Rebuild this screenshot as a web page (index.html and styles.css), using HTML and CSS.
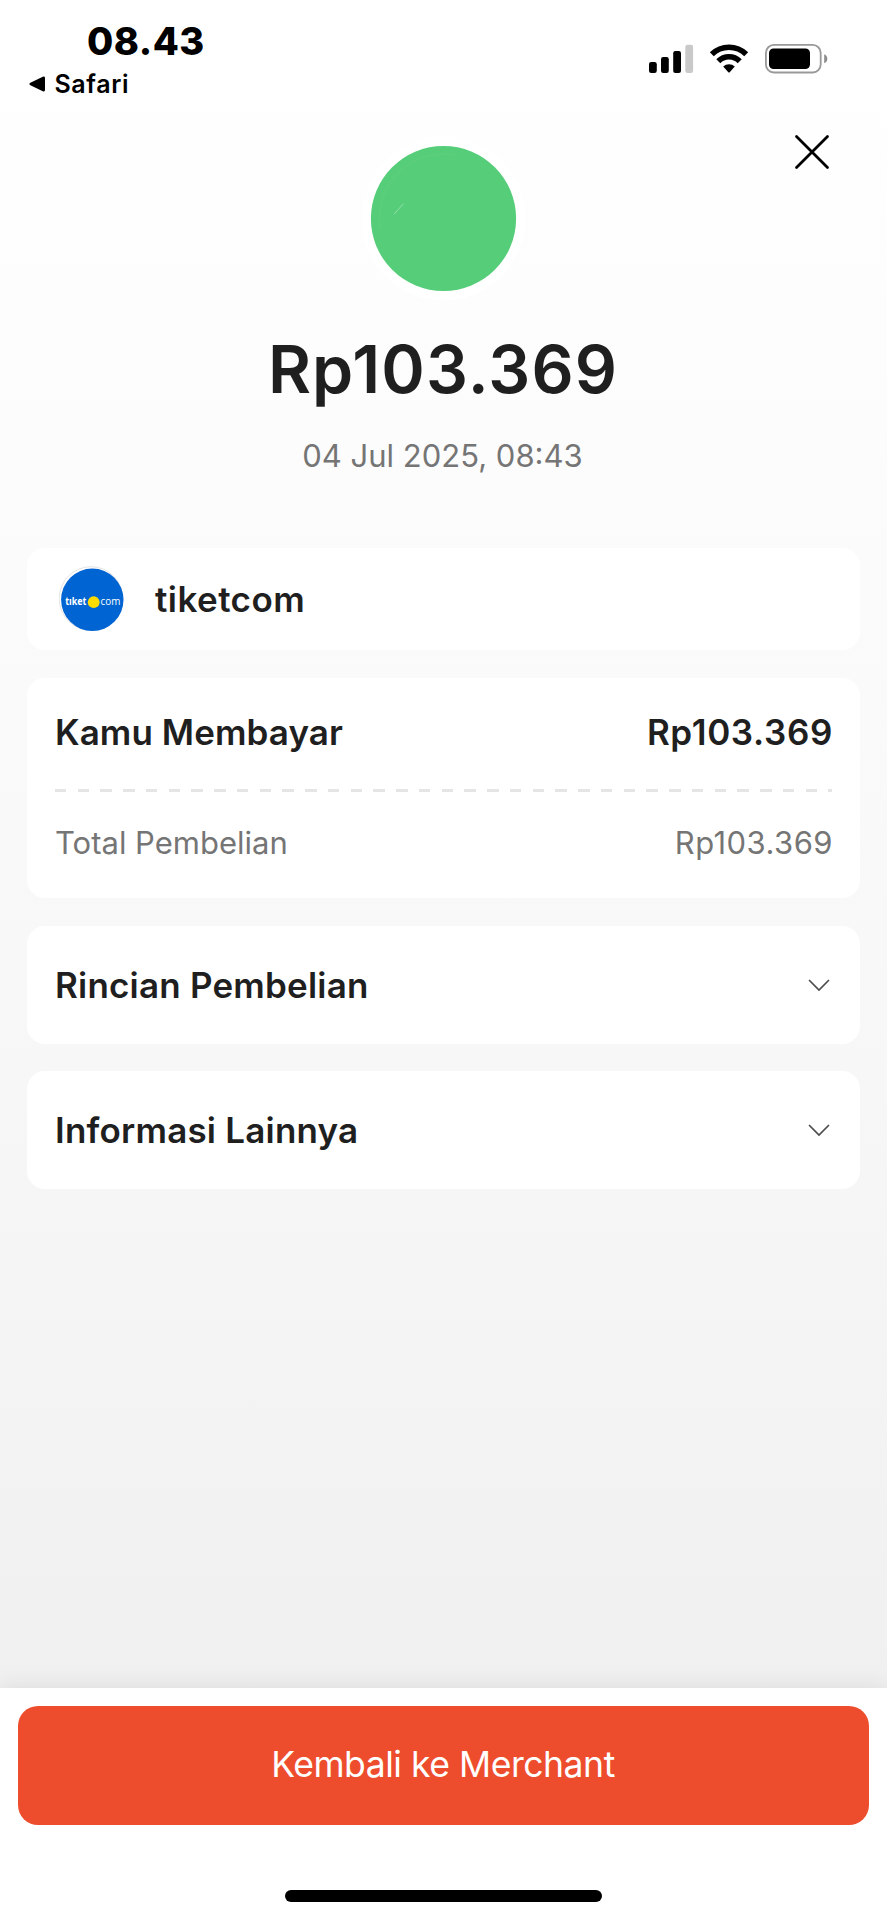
FILE: index.html
```html
<!DOCTYPE html>
<html lang="id">
<head>
<meta charset="utf-8">
<title>Detail Pembayaran</title>
<link rel="stylesheet" href="styles.css">
</head>
<body>
<div class="screen">
  <header class="status">
    <div class="status-left">
      <div class="time"><span>08.43</span></div>
      <div class="back">
        <svg width="17" height="16" viewBox="0 0 17 16"><path d="M1.4 6.8 13.8.7Q16 0 16 2V14Q16 16 13.8 15.3L1.4 9.2Q-.6 8 1.4 6.8Z"/></svg>
        <span>Safari</span>
      </div>
    </div>
    <svg class="status-icons" width="180" height="32" viewBox="648 43 180 32">
      <rect x="649" y="62" width="7.8" height="11" rx="2.2"/>
      <rect x="661" y="57" width="7.8" height="16" rx="2.2"/>
      <rect x="673.2" y="51" width="7.8" height="22" rx="2.2"/>
      <rect x="685.3" y="44.8" width="7.8" height="28.2" rx="2.2" fill="#c9c9c9"/>
      <g fill="none" stroke="#000" stroke-width="5.6">
        <path d="M711.8 54.3A24.6 24.6 0 0 1 746.2 54.3"/>
        <path d="M718.3 61.2A15 15 0 0 1 739.7 61.2"/>
      </g>
      <path d="M723.2 66.6A8.4 8.4 0 0 1 734.8 66.6L729.7 72.2Q729 72.9 728.3 72.2Z"/>
      <rect x="765.9" y="44.9" width="54.8" height="27.6" rx="8" fill="none" stroke="#999" stroke-width="1.8"/>
      <rect x="769" y="48.4" width="41" height="20.7" rx="4.6"/>
      <path d="M824.2 54.3Q827.3 55.5 827.3 58.8 827.3 62 824.2 63.2Z" fill="#8c8c8c"/>
    </svg>
  </header>

  <main class="content">
    <section class="hero">
      <button class="close" aria-label="Tutup">
        <svg width="36" height="36" viewBox="0 0 36 36" fill="none" stroke="#000" stroke-width="2.8" stroke-linecap="round"><path d="M2.5 2.5 33.5 33.5M33.5 2.5 2.5 33.5"/></svg>
      </button>
      <svg class="badge" width="165" height="165" viewBox="-82.5 -82.5 165 165">
        <circle r="82" fill="#fff"/>
        <circle r="72.6" fill="#56cd79"/>
        <path d="M-63.5 10A64.3 64.3 0 0 1 10-63.5" fill="none" stroke="#64cf82" stroke-width=".7"/>
        <path d="M-49.5-4.2-40-15" stroke="#91dfa8" stroke-width="1"/>
      </svg>
      <h1 class="amount"><span>Rp103.369</span></h1>
      <p class="date"><span>04 Jul 2025, 08:43</span></p>
    </section>

    <section class="card merchant">
      <svg class="logo" width="66" height="68" viewBox="59 565 66 68">
        <circle cx="91" cy="598.5" r="31.8" fill="#fff" stroke="#e4e4e4" stroke-width="1"/>
        <circle cx="92.3" cy="599.8" r="31.2" fill="#0064d2"/>
        <text class="logo-bold" x="65.2" y="604.6" textLength="21.3" lengthAdjust="spacingAndGlyphs">tıket</text>
        <circle cx="93.7" cy="602.2" r="5.9" fill="#ffdc00"/>
        <text class="logo-text" x="100.5" y="604.6" textLength="19.8" lengthAdjust="spacingAndGlyphs">com</text>
      </svg>
      <span class="heading name">tiketcom</span>
    </section>

    <section class="card payment">
      <div class="row heading"><span class="payer">Kamu Membayar</span><span class="sum">Rp103.369</span></div>
      <div class="divider"></div>
      <div class="row detail"><span>Total Pembelian</span><span class="subtotal">Rp103.369</span></div>
    </section>

    <section class="card fold heading">
      <span>Rincian Pembelian</span>
      <svg width="22" height="14" viewBox="0 0 22 14"><path d="M1.5 2.5 11 12 20.5 2.5"/></svg>
    </section>
    <section class="card fold heading">
      <span>Informasi Lainnya</span>
      <svg width="22" height="14" viewBox="0 0 22 14"><path d="M1.5 2.5 11 12 20.5 2.5"/></svg>
    </section>
  </main>

  <footer class="footer">
    <button class="cta"><span>Kembali ke Merchant</span></button>
    <div class="home-bar"></div>
  </footer>
</div>
</body>
</html>
```
FILE: styles.css
```css
* { box-sizing: border-box; margin: 0; padding: 0; }
body { font-family: Inter, "Liberation Sans", sans-serif; color: #1f1f1f; }
button { border: 0; background: none; font: inherit; }
svg { display: block; flex: none; }
span { white-space: nowrap; }

.screen {
  display: flex;
  flex-direction: column;
  width: 887px;
  height: 1920px;
  background: linear-gradient(#fff 0, #fdfdfd 300px, #fafafa 700px, #f7f7f7 1080px, #f0f0f0 1688px);
  overflow: hidden;
}

.status {
  display: flex;
  justify-content: space-between;
  height: 136px;
  padding: 20px 59px 0 29px;
  color: #000;
}
.time { padding-left: 58px; font-size: 38px; line-height: 42px; font-weight: 800; letter-spacing: .5px; }
.back { display: flex; align-items: center; gap: 8.5px; height: 30px; margin-top: 7px; font-size: 25px; line-height: 30px; font-weight: 600; letter-spacing: .6px; }
.status-icons { margin-top: 23px; }

.content { flex: 1; padding: 0 27px; }
.hero { position: relative; display: flex; flex-direction: column; align-items: center; height: 412px; }
.close { position: absolute; top: -2px; right: 30px; }
.amount { margin-top: 27.5px; padding-right: 1px; font-size: 66px; line-height: 80px; font-weight: 600; letter-spacing: 1.15px; }
.date { margin-top: 28.5px; padding-right: 2px; font-size: 31px; line-height: 38px; color: #757575; }

.card { margin-bottom: 27.5px; border-radius: 18px; background: #fff; }
.heading { font-size: 35px; line-height: 42px; font-weight: 600; letter-spacing: .2px; }
.merchant { display: flex; align-items: center; gap: 30px; height: 102px; padding-left: 32px; }
.name { margin-top: -1px; letter-spacing: .45px; }
.logo-bold, .logo-text { font-family: "Open Sans", sans-serif; font-size: 11px; fill: #fff; }
.logo-bold { font-weight: 700; }
.logo-text { font-weight: 500; }

.payment { height: 220.5px; padding: 33px 28px 0; }
.row { display: flex; justify-content: space-between; }
.payer { letter-spacing: .08px; }
.sum { margin-right: -1px; letter-spacing: .65px; }
.divider {
  height: 2.5px;
  margin: 36.5px 0 32px;
  background: repeating-linear-gradient(90deg, #e5e5e5 0 11.4px, transparent 11.4px 22.75px);
}
.detail { font-size: 31px; line-height: 38px; color: #757575; }
.subtotal { margin-right: -1px; letter-spacing: .45px; }

.fold { display: flex; align-items: center; justify-content: space-between; height: 118px; padding: 0 30px 0 28px; }
.fold path { fill: none; stroke: #4c4c4c; stroke-width: 1.7; stroke-linecap: round; }

.footer {
  display: flex;
  flex-direction: column;
  align-items: center;
  height: 232px;
  padding: 18px 18px 0;
  background: #fff;
  box-shadow: 0 0 22px rgba(0, 0, 0, .09);
}
.cta { width: 851px; height: 118.5px; padding-right: 1px; border-radius: 20px; background: #ee4d2d; color: #fff; font-size: 35.5px; line-height: 42px; font-weight: 400; letter-spacing: -.45px; }
.home-bar { width: 316.5px; height: 11.5px; margin-top: 65.5px; border-radius: 6px; background: #000; }
```
